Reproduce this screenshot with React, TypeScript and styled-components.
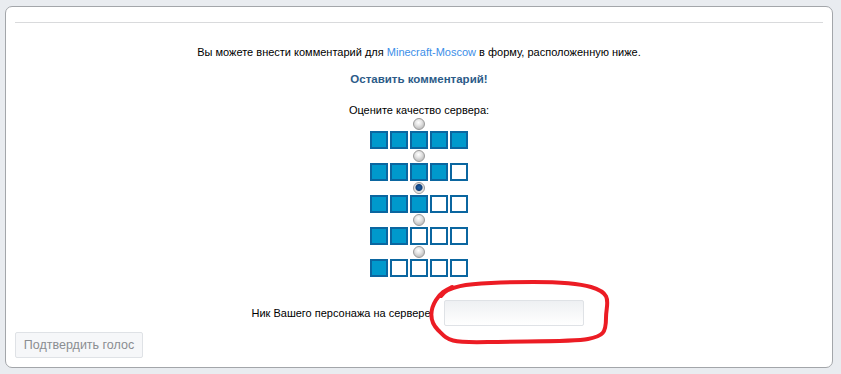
import React from 'react'
import styled, { createGlobalStyle } from 'styled-components'

const GlobalStyle = createGlobalStyle`
  html, body {
    margin: 0;
    padding: 0;
    background: #e9ecf0;
  }
  body {
    font-family: Tahoma, "Liberation Sans", Arial, sans-serif;
    font-size: 11px;
    color: #000;
  }
`

const Page = styled.div`
  padding: 6px 8px 5px 5px;
`

const Panel = styled.div`
  background: #fff;
  border: 1px solid #a3a6aa;
  border-radius: 7px;
  height: 362px;
  box-sizing: border-box;
  padding: 15px 9px 0 9px;
  display: flex;
  flex-direction: column;
`

const Rule = styled.div`
  height: 1px;
  background: #d9dadc;
`

const Intro = styled.p`
  margin: 22px 0 0;
  text-align: center;
  line-height: 14px;
`

const Link = styled.a`
  color: #3b8ee8;
  text-decoration: none;
`

const Heading = styled.p`
  margin: 13px 0 0;
  text-align: center;
  font-weight: bold;
  font-size: 11.5px;
  color: #2c5b88;
  line-height: 14px;
`

const RatingBlock = styled.div`
  margin-top: 17px;
  display: flex;
  flex-direction: column;
  align-items: center;
`

const RatingLabel = styled.div`
  line-height: 14px;
`

const Option = styled.div`
  display: flex;
  flex-direction: column;
  align-items: center;
  margin-top: 1px;
`

const Radio = styled.span<{ $checked?: boolean }>`
  width: 12px;
  height: 12px;
  border-radius: 50%;
  box-sizing: border-box;
  border: 1px solid #9a9a9a;
  background: ${p =>
    p.$checked
      ? 'radial-gradient(circle at 50% 45%, #1b5fa8 0, #0f3f7a 3px, #dadada 4px, #f4f4f4 6px)'
      : 'radial-gradient(circle at 45% 35%, #ffffff 0, #e6e6e6 3px, #c4c4c4 6px)'};
  margin-bottom: 1px;
`

const Squares = styled.div`
  display: flex;
  gap: 2px;
`

const Square = styled.span<{ $on: boolean }>`
  width: 18px;
  height: 18px;
  box-sizing: border-box;
  border: 2px solid #0b66a0;
  background: ${p => (p.$on ? '#0099cc' : '#fff')};
`

const FieldRow = styled.div`
  margin-top: 23px;
  display: flex;
  justify-content: center;
  align-items: center;
  gap: 13px;
  padding-right: 3px;
`

const FieldLabel = styled.span`
  line-height: 14px;
`

const InputWrap = styled.div`
  position: relative;
`

const Input = styled.input`
  display: block;
  width: 140px;
  height: 26px;
  box-sizing: border-box;
  border: 1px solid #dfe2e6;
  border-radius: 2px;
  background: linear-gradient(#eef0f3, #ffffff);
  outline: none;
`

const Scribble = styled.svg`
  position: absolute;
  left: -16px;
  top: -22px;
  overflow: visible;
  pointer-events: none;
`

const Footer = styled.div`
  margin-top: 6px;
`

const Button = styled.button`
  font-family: Tahoma, "Liberation Sans", Arial, sans-serif;
  font-size: 12.5px;
  color: #8a8d91;
  background: #f6f7f9;
  border: 1px solid #dfe2e6;
  border-radius: 2px;
  height: 26px;
  width: 128px;
  padding: 0;
`

const rows = [5, 4, 3, 2, 1]

export default function App() {
  return (
    <>
      <GlobalStyle />
      <Page>
        <Panel>
          <Rule />
          <Intro>
            Вы можете внести комментарий для <Link href="#">Minecraft-Moscow</Link> в
            форму, расположенную ниже.
          </Intro>
          <Heading>Оставить комментарий!</Heading>
          <RatingBlock>
            <RatingLabel>Оцените качество сервера:</RatingLabel>
            {rows.map(n => (
              <Option key={n}>
                <Radio $checked={n === 3} />
                <Squares>
                  {[1, 2, 3, 4, 5].map(i => (
                    <Square key={i} $on={i <= n} />
                  ))}
                </Squares>
              </Option>
            ))}
          </RatingBlock>
          <FieldRow>
            <FieldLabel>Ник Вашего персонажа на сервере</FieldLabel>
            <InputWrap>
              <Input type="text" />
              <Scribble width="182" height="70" viewBox="0 0 182 70">
                <path
                  d="M13,18 C20,8 40,6 63,5 S140,2 163,9 S178,25 178,40 S175,58 160,61 S100,63 60,64 S20,62 10,52 S3,30 8,22 S18,12 24,9"
                  fill="none"
                  stroke="#ec1c24"
                  strokeWidth="4"
                  strokeLinecap="round"
                  strokeLinejoin="round"
                />
              </Scribble>
            </InputWrap>
          </FieldRow>
          <Footer>
            <Button>Подтвердить голос</Button>
          </Footer>
        </Panel>
      </Page>
    </>
  )
}
